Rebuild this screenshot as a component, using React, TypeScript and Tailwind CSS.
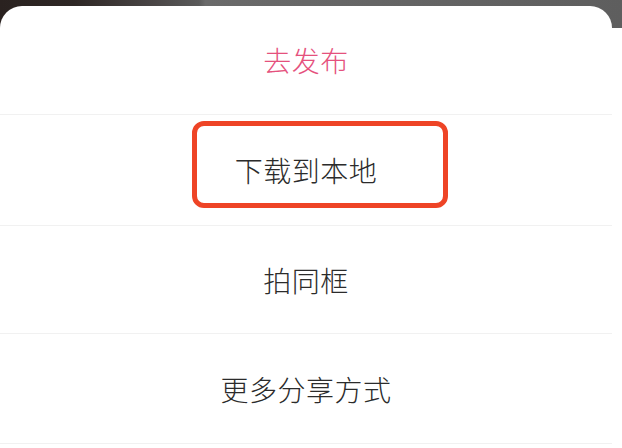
import React from "react";

const rows = [
  { label: "去发布", pink: true, h: "h-[109px]" },
  { label: "下载到本地", pink: false, h: "h-[111px]", boxed: true },
  { label: "拍同框", pink: false, h: "h-[108px]" },
  { label: "更多分享方式", pink: false, h: "h-[110px]" },
];

export default function App() {
  return (
    <div
      className="relative w-[622px] h-[448px] overflow-hidden bg-white"
      style={{ fontFamily: '"Noto Sans CJK SC", "Noto Sans", sans-serif' }}
    >
      {/* photo behind the sheet */}
      <div className="absolute left-0 top-0 w-full h-[28px] bg-[linear-gradient(90deg,#2a2220_0%,#2e2725_12%,#4a4646_25%,#5a5a5a_32%,#6a6a6a_33%,#656565_60%,#5e5e5e_100%)]" />
      <div className="relative z-10 mt-[6px] w-[612px] bg-white rounded-t-[22px] flex flex-col">
        {rows.map((r) => (
          <div
            key={r.label}
            className={`relative ${r.h} flex items-center justify-center border-b border-[#f1f1f1]`}
          >
            <span
              className={`text-[28px] leading-none font-light tracking-[0.5px] ${
                r.pink ? "text-[#e5517d]" : "text-[#2b2b2b]"
              }`}
            >
              {r.label}
            </span>
            {r.boxed && (
              <div className="absolute left-[192px] top-[6px] w-[256px] h-[87px] rounded-[12px] border-[5px] border-[#ee4426]" />
            )}
          </div>
        ))}
      </div>
    </div>
  );
}
